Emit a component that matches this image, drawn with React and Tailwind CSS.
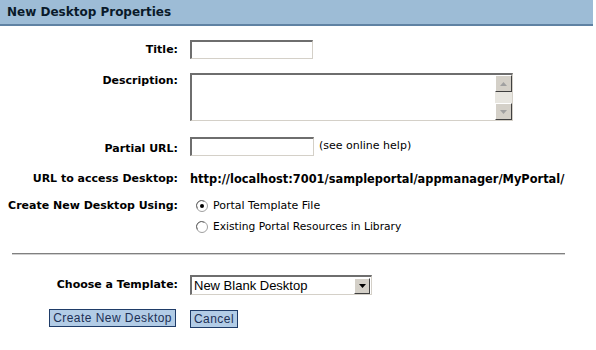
import React from "react";

const inset = "border-t-2 border-l-2 border-b border-r border-t-[#6e6e6e] border-l-[#6e6e6e] border-b-[#d4d0c8] border-r-[#d4d0c8] bg-white";

function Radio({ checked }) {
  return (
    <svg width="12" height="12" viewBox="0 0 12 12" className="shrink-0">
      <circle cx="6" cy="6" r="5.5" fill="#fff" stroke="#a0a0a0" />
      <path d="M1.5 8.5 A5 5 0 0 1 8.5 1.5" fill="none" stroke="#6e6e6e" strokeWidth="1" />
      {checked && <circle cx="6" cy="6" r="2" fill="#000" />}
    </svg>
  );
}

function ScrollBtn({ up }) {
  return (
    <div className="w-[17px] h-[17px] bg-[#d4d0c8] border-t border-l border-t-white border-l-white border-b border-r border-b-[#404040] border-r-[#404040] flex items-center justify-center">
      <svg width="7" height="4" viewBox="0 0 7 4">
        {up ? <path d="M0 4 L3.5 0 L7 4 Z" fill="#a0a0a0" /> : <path d="M0 0 L3.5 4 L7 0 Z" fill="#a0a0a0" />}
      </svg>
    </div>
  );
}

export default function App() {
  const label = "text-right font-bold text-[11px] text-black";
  const btnFont = { fontFamily: "'Liberation Sans', Arial, sans-serif" };
  return (
    <div className="w-[596px] h-[350px] bg-white overflow-hidden" style={{ fontFamily: "Tahoma, 'DejaVu Sans', sans-serif" }}>
      <div className="h-[26px] bg-[#9dbcd6] border-b-2 border-b-[#5f82a3] flex items-center pl-[7px] mr-[3px]">
        <span className="font-bold text-[12px] text-[#0a1a2a]">New Desktop Properties</span>
      </div>
      <div className="grid grid-cols-[178px_1fr] gap-x-[12px] mt-[14px] items-start">
        <div className={`${label} pt-[2px] h-[19px]`}>Title:</div>
        <div className={`${inset} w-[123px] h-[19px]`}></div>

        <div className={`${label} mt-[14px]`}>Description:</div>
        <div className={`${inset} w-[323px] h-[48px] mt-[14px] flex justify-end`}>
          <div className="w-[17px] h-full flex flex-col justify-between bg-[#e8e6e0]">
            <ScrollBtn up />
            <ScrollBtn />
          </div>
        </div>

        <div className={`${label} mt-[18px] pt-[2px]`}>Partial URL:</div>
        <div className="flex items-center mt-[16px]">
          <div className={`${inset} w-[124px] h-[19px]`}></div>
          <span className="text-[11px] ml-[5px]">(see online help)</span>
        </div>

        <div className={`${label} mt-[13px]`}>URL to access Desktop:</div>
        <div className="font-bold text-[11.4px] mt-[13px] whitespace-nowrap">http://localhost:7001/sampleportal/appmanager/MyPortal/</div>

        <div className={`${label} mt-[10px]`}>Create New Desktop Using:</div>
        <div className="mt-[10px] flex flex-col gap-[5px] text-[11px]">
          <div className="flex items-center gap-[5px] pl-[6px]"><Radio checked /><span>Portal Template File</span></div>
          <div className="flex items-center gap-[5px] pl-[6px]"><Radio /><span className="text-[10.7px]">Existing Portal Resources in Library</span></div>
        </div>
      </div>
      <div className="ml-[12px] w-[553px] mt-[18px] border-t border-t-[#808080] border-b border-b-[#d0d0d0]"></div>
      <div className="grid grid-cols-[178px_1fr] gap-x-[12px] mt-[20px] items-center">
        <div className={label}>Choose a Template:</div>
        <div className={`${inset} w-[182px] h-[20px] flex items-center justify-between`}>
          <span className="text-[13px] pl-[2px]" style={btnFont}>New Blank Desktop</span>
          <div className="w-[16px] h-[16px] bg-[#d4d0c8] border-t border-l border-t-white border-l-white border-b border-r border-b-[#404040] border-r-[#404040] flex items-center justify-center mr-[1px]">
            <svg width="7" height="4" viewBox="0 0 7 4"><path d="M0 0 L3.5 4 L7 0 Z" fill="#000" /></svg>
          </div>
        </div>
        <div className="flex justify-end mt-[11px]">
          <button className="h-[18px] px-[3px] bg-[#b2cce6] border border-[#1f3c68] text-[12px] leading-none tracking-[0.45px] text-[#1c2f55] mr-[2px]" style={btnFont}>Create New Desktop</button>
        </div>
        <div className="mt-[11px]">
          <button className="h-[18px] px-[3px] bg-[#b2cce6] border border-[#1f3c68] text-[12px] leading-none tracking-[0.45px] text-[#1c2f55]" style={btnFont}>Cancel</button>
        </div>
      </div>
    </div>
  );
}
